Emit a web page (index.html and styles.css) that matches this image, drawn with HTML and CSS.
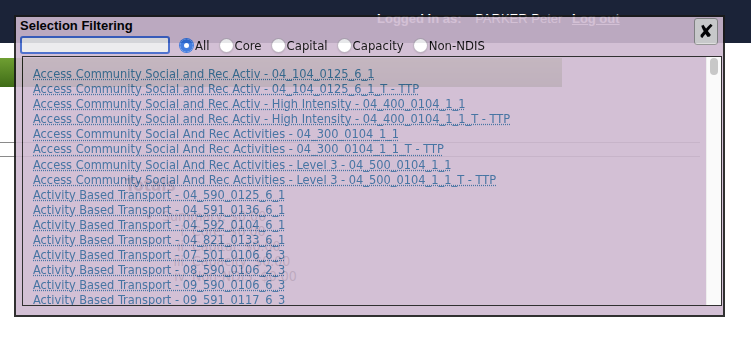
FILE: index.html
```html
<!DOCTYPE html>
<html>
<head>
	<title>Support Selection</title>
	<link rel="stylesheet" href="styles.css">
</head>
<body>
	<div class="page">
		<div class="topbar">
			<span class="userinfo"><b>Logged in as:</b> <span class="username">PARKER Peter</span> <a href="#" class="logout">Log out</a></span>
		</div>
		<div class="toolbar"></div>
		<div class="budget-table">
			<div class="budget-row"></div>
		</div>
		<div class="totals">
			<div class="totals-title">Totals</div>
			<ul class="totals-list">
				<li>Summary: $0.00
					<ol type="i">
						<li>Core: $0.00</li>
						<li>Capital: $0.00</li>
						<li>Capacity: $0.00</li>
						<li>Non-NDIS: $0.00</li>
					</ol>
				</li>
			</ul>
		</div>
	</div>

	<div class="dialog">
		<div class="dialog-title">Selection Filtering</div>
		<button class="close-btn">&#10008;</button>
		<div class="filter-row">
			<input type="text" class="filter-text" autofocus>
			<label><input type="radio" name="SupportType" value="all" checked>All</label>
			<label><input type="radio" name="SupportType" value="core">Core</label>
			<label><input type="radio" name="SupportType" value="capital">Capital</label>
			<label><input type="radio" name="SupportType" value="capacity">Capacity</label>
			<label><input type="radio" name="SupportType" value="nonndis">Non-NDIS</label>
		</div>
		<div class="support-list">
			<div class="support-items">
				<a href="#">Access Community Social and Rec Activ - 04_104_0125_6_1</a>
				<a href="#">Access Community Social and Rec Activ - 04_104_0125_6_1_T - TTP</a>
				<a href="#">Access Community Social and Rec Activ - High Intensity - 04_400_0104_1_1</a>
				<a href="#">Access Community Social and Rec Activ - High Intensity - 04_400_0104_1_1_T - TTP</a>
				<a href="#">Access Community Social And Rec Activities - 04_300_0104_1_1</a>
				<a href="#">Access Community Social And Rec Activities - 04_300_0104_1_1_T - TTP</a>
				<a href="#">Access Community Social And Rec Activities - Level 3 - 04_500_0104_1_1</a>
				<a href="#">Access Community Social And Rec Activities - Level 3 - 04_500_0104_1_1_T - TTP</a>
				<a href="#">Activity Based Transport - 04_590_0125_6_1</a>
				<a href="#">Activity Based Transport - 04_591_0136_6_1</a>
				<a href="#">Activity Based Transport - 04_592_0104_6_1</a>
				<a href="#">Activity Based Transport - 04_821_0133_6_1</a>
				<a href="#">Activity Based Transport - 07_501_0106_6_3</a>
				<a href="#">Activity Based Transport - 08_590_0106_2_3</a>
				<a href="#">Activity Based Transport - 09_590_0106_6_3</a>
				<a href="#">Activity Based Transport - 09_591_0117_6_3</a>
			</div>
			<div class="scroll-track"><div class="scroll-thumb"></div></div>
		</div>
	</div>
</body>
</html>
```

FILE: styles.css
```css
body {
	margin: 0;
	background-color: white;
	font-family: "DejaVu Sans Condensed", "DejaVu Sans", sans-serif;
}

.page {
	width: 751px;
}

.topbar {
	height: 43px;
	background-color: #1b2338;
	box-sizing: border-box;
	padding: 11px 0 0 377px;
	font-family: "Liberation Sans", Arial, sans-serif;
	font-size: 13px;
	line-height: 16px;
	color: white;
}

.username {
	margin-left: 10px;
	margin-right: 6px;
}

.logout {
	color: white;
	font-weight: bold;
}

.toolbar {
	margin-top: 15px;
	width: 562px;
	height: 29px;
	background: linear-gradient(#6f9f32, #3f6c17);
}

.budget-table {
	margin-top: 55px;
	width: 700px;
	border-top: 1px solid #8a8a8a;
}

.budget-row {
	height: 13px;
	border-bottom: 1px solid #8a8a8a;
}

.totals {
	padding: 18px 0 0 125px;
	color: #222;
}

.totals-title {
	font-size: 17px;
	font-weight: bold;
	line-height: 20px;
}

.totals-list {
	margin: 14px 0 0 0;
	padding-left: 37px;
	font-size: 14px;
	line-height: 15px;
}

.totals-list ol {
	margin: 0;
	padding-left: 30px;
}

/* filter popup */
.dialog {
	position: absolute;
	left: 14px;
	top: 15px;
	width: 707px;
	height: 298px;
	border: 2px solid #1a1a1a;
	background-color: rgb(207, 185, 209);
	opacity: 0.9;
}

.dialog-title {
	height: 19px;
	padding: 1px 0 0 4px;
	box-sizing: border-box;
	font-family: "Liberation Sans", Arial, sans-serif;
	font-size: 13px;
	font-weight: bold;
	line-height: 16px;
	color: black;
}

.close-btn {
	position: absolute;
	top: 1px;
	right: 5px;
	width: 24px;
	height: 27px;
	padding: 0;
	border: 1px solid #8c8c8c;
	border-radius: 3px;
	background-color: #dcdcdc;
	font-family: "DejaVu Sans", sans-serif;
	font-size: 19px;
	font-weight: bold;
	line-height: 25px;
	color: black;
}

.filter-row {
	display: flex;
	align-items: center;
	height: 18px;
	padding-left: 4px;
	font-size: 13px;
	color: black;
}

.filter-text {
	width: 150px;
	height: 18px;
	margin: 0 10px 0 0;
	padding: 0 4px;
	box-sizing: border-box;
	border: 2px solid #3b63c9;
	border-radius: 3px;
	background-color: #eaeaec;
	outline: none;
}

.filter-row label {
	display: flex;
	align-items: center;
	margin-right: 10px;
}

.filter-row input[type="radio"] {
	appearance: none;
	width: 13px;
	height: 13px;
	margin: 0 2px 0 0;
	border-radius: 50%;
	background-color: white;
	box-shadow: 0 0 0 1px #b9aebc, 0 1px 2px rgba(0, 0, 0, 0.3);
}

.filter-row input[type="radio"]:checked {
	background-color: white;
	box-shadow: inset 0 0 0 4px #2f6fdc, 0 0 0 1px #2f6fdc;
}

.support-list {
	display: flex;
	margin: 2px 0 0 6px;
	width: 700px;
	height: 250px;
	box-sizing: border-box;
	border: 1px solid #1a1a1a;
}

.support-items {
	flex: 1;
	overflow: hidden;
	padding: 9px 0 0 10px;
}

.support-items a {
	display: table;
	font-size: 12.7px;
	line-height: 15.1px;
	color: #336699;
	text-decoration: underline dotted;
}

.scroll-track {
	width: 15px;
	padding: 1px 3px 0 3px;
	box-sizing: border-box;
	background-color: #fafafa;
	border-left: 1px solid #ececec;
}

.scroll-thumb {
	height: 17px;
	border-radius: 4px;
	background-color: #c2c2c2;
}
```
